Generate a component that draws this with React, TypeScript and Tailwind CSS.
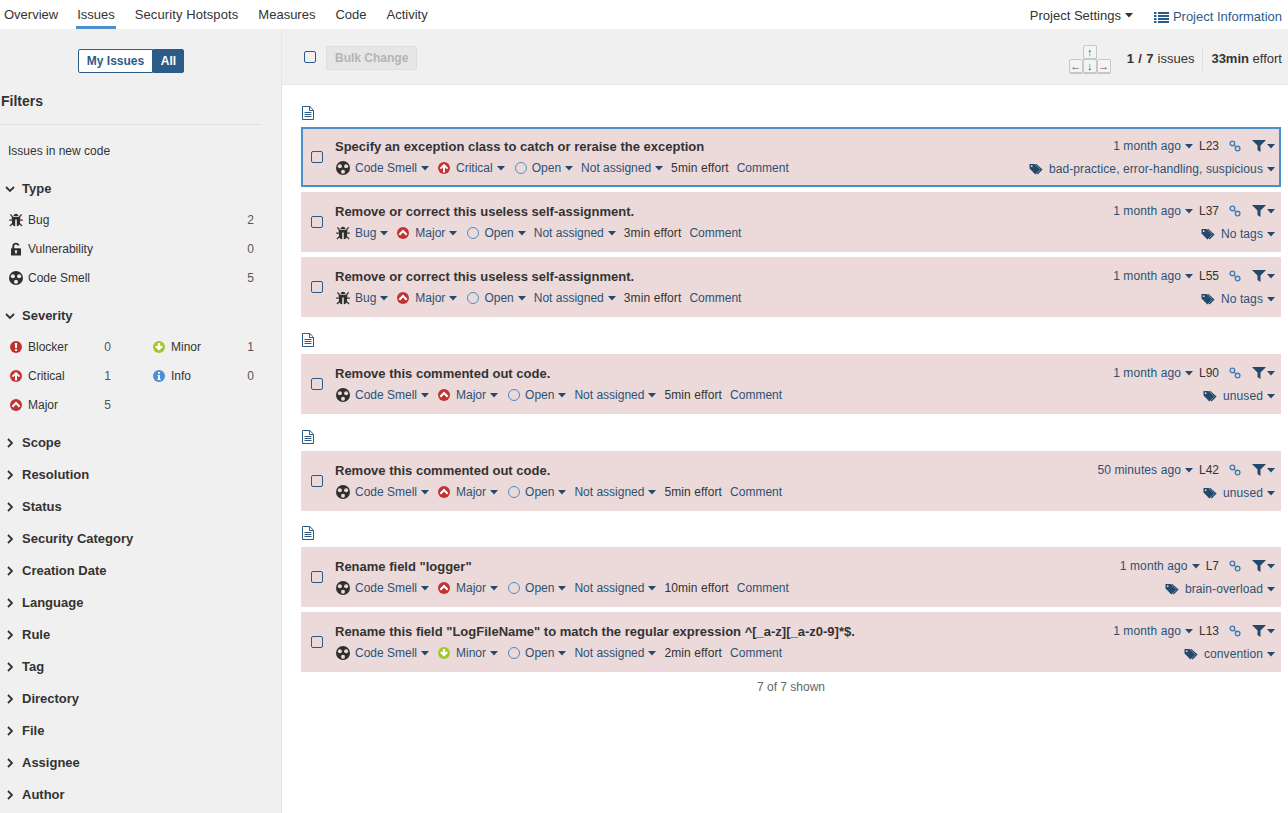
import type { ReactNode } from 'react';

const FONT = "font-['Liberation_Sans',Arial,sans-serif]";

function Caret({ className = '' }: { className?: string }) {
  return (
    <svg width="8" height="5" viewBox="0 0 8 5" className={`ml-1 shrink-0 ${className}`}>
      <path d="M0 0h8L4 4.600z" fill="currentColor" />
    </svg>
  );
}

function BugIcon() {
  return (
    <svg width="14" height="14" viewBox="0 0 14 14" className="shrink-0">
      <path
        d="M4.400 3.200C4.600 1.700 5.700.8 7 .8s2.400.9 2.600 2.400zM3.200 3.900h7.600c.3 0 .5.2.5.5V6H11v4.200c0 1.600-1.400 3-3.200 3.100V6.500H6.200v6.800C4.400 13.200 3 11.800 3 10.200V6h-.3V4.400c0-.3.2-.5.5-.5z"
        fill="#2f2f2f"
      />
      <path
        d="M1.400 1.400l2.200 2.600M12.600 1.400l-2.200 2.600M.2 7.200h3.200M13.800 7.200h-3.200M.9 13l2.900-2.900M13.100 13l-2.900-2.900"
        stroke="#2f2f2f"
        strokeWidth="1.200"
        fill="none"
      />
    </svg>
  );
}

function VulnerabilityIcon() {
  return (
    <svg width="14" height="14" viewBox="0 0 14 14" className="shrink-0">
      <path
        d="M3.300 6.200V4.300C3.300 2.200 4.900.8 6.900.8c1.800 0 3.100 1 3.500 2.700H8.500C8.200 2.900 7.700 2.600 6.900 2.600c-1 0-1.700.7-1.700 1.700v1.900h6.100c.4 0 .7.3.7.7v6c0 .4-.3.7-.7.7H2.700c-.4 0-.7-.3-.7-.7v-6c0-.4.3-.7.7-.7zM7 8.200c-.7 0-1.200.5-1.200 1.200 0 .4.200.8.600 1v1.300h1.200v-1.300c.4-.2.600-.6.600-1 0-.7-.5-1.200-1.200-1.200z"
        fill="#2f2f2f"
        fillRule="evenodd"
      />
    </svg>
  );
}

function CodeSmellIcon({ bg = '#ecd9d9' }: { bg?: string }) {
  return (
    <svg width="14" height="14" viewBox="0 0 14 14" className="shrink-0">
      <circle cx="7" cy="7" r="7" fill="#2f2f2f" />
      <circle cx="3.900" cy="5.200" r="2" fill={bg} />
      <circle cx="10.100" cy="5.200" r="2" fill={bg} />
      <circle cx="7" cy="10.700" r="2" fill={bg} />
    </svg>
  );
}

function SeverityIcon({ level }: { level: string }) {
  if (level === 'Blocker') {
    return (
      <svg width="14" height="14" viewBox="0 0 14 14" className="shrink-0">
        <circle cx="7" cy="7" r="6" fill="#c13333" />
        <path d="M6 3h2v5H6zM6 9.200h2V11H6z" fill="#fff" />
      </svg>
    );
  }
  if (level === 'Critical') {
    return (
      <svg width="14" height="14" viewBox="0 0 14 14" className="shrink-0">
        <circle cx="7" cy="7" r="6" fill="#c13333" />
        <path d="M7 2.800l4.200 4.200-1.300 1.200-1.900-1.900V11.400H6V6.300L4.100 8.200 2.800 7z" fill="#fff" />
      </svg>
    );
  }
  if (level === 'Major') {
    return (
      <svg width="14" height="14" viewBox="0 0 14 14" className="shrink-0">
        <circle cx="7" cy="7" r="6" fill="#c13333" />
        <path d="M7 3.600l4.400 4.300-1.500 1.500L7 6.600 4.100 9.400 2.600 7.900z" fill="#fff" />
      </svg>
    );
  }
  if (level === 'Minor') {
    return (
      <svg width="14" height="14" viewBox="0 0 14 14" className="shrink-0">
        <circle cx="7" cy="7" r="6" fill="#a4c52b" />
        <path d="M5.800 3h2.400v3.600l1.600-1.200 1.200 1.400L7 10.600 3 6.800l1.200-1.400 1.600 1.200z" fill="#fff" />
      </svg>
    );
  }
  return (
    <svg width="14" height="14" viewBox="0 0 14 14" className="shrink-0">
      <circle cx="7" cy="7" r="6" fill="#4b8fd0" />
      <path d="M6 3h2v1.800H6zM5.600 6h2.400v4h.8v1H5.400v-1H6V7h-.4z" fill="#fff" />
    </svg>
  );
}

function TypeIcon({ type }: { type: string }) {
  if (type === 'Bug') return <BugIcon />;
  if (type === 'Vulnerability') return <VulnerabilityIcon />;
  return <CodeSmellIcon />;
}

function FileIcon() {
  return (
    <svg width="14" height="14" viewBox="0 0 14 14">
      <path
        d="M1.500.5h7.300l3.700 3.700v9.300h-11zM8.500.7v3.800h3.800M3.500 6.500h7M3.500 8.500h7M3.500 10.500h7"
        fill="none"
        stroke="#2d5b88"
        strokeWidth="1"
      />
    </svg>
  );
}

function TagIcon() {
  return (
    <svg width="15" height="12" viewBox="0 0 15 12" className="shrink-0">
      <path d="M0.500 1h5l5.800 5.600L6.400 11.500.5 5.600z" fill="#25496b" />
      <path d="M7.400 1l6.200 5.600-4.900 4.900-1-.9 3.800-4L6 1z" fill="#25496b" />
      <circle cx="2.700" cy="3.200" r="0.900" fill="#ecd9d9" />
    </svg>
  );
}

function LinkIcon() {
  return (
    <svg width="12" height="12" viewBox="0 0 12 12">
      <circle cx="3.400" cy="3.400" r="2.300" fill="none" stroke="#3f7fb8" strokeWidth="1.400" />
      <circle cx="8.600" cy="8.600" r="2.300" fill="none" stroke="#3f7fb8" strokeWidth="1.400" />
      <path d="M4.800 4.800l2.400 2.400" stroke="#3f7fb8" strokeWidth="1.200" />
    </svg>
  );
}

function FilterIcon() {
  return (
    <span className="flex items-center text-[#25496b]">
      <svg width="14" height="12" viewBox="0 0 14 12">
        <path d="M0 0h14L8.500 5.600V12L5.500 10V5.600z" fill="currentColor" />
      </svg>
      <Caret className="!ml-[1px]" />
    </span>
  );
}

function Dropdown({ icon, label, className = '' }: { icon?: ReactNode; label: string; className?: string }) {
  return (
    <span className={`flex items-center text-[#2b5275] ${className}`}>
      {icon && <span className="mr-[5px] flex">{icon}</span>}
      {label}
      <Caret className="text-[#25496b]" />
    </span>
  );
}

type Issue = {
  title: string;
  type: string;
  severity: string;
  effort: string;
  age: string;
  line: string;
  tags: string;
  selected?: boolean;
};

function IssueRow({ issue }: { issue: Issue }) {
  const border = issue.selected ? 'border-2 border-[#4b8fc9]' : 'border-2 border-[#ecd9d9]';
  return (
    <div className={`flex h-[60px] items-center bg-[#ecd9d9] pr-[4px] ${border}`}>
      <div className="ml-[8px] h-[12px] w-[12px] shrink-0 rounded-[2px] border border-[#2d5b88]" />
      <div className="ml-[12px] flex min-w-0 flex-1 flex-col">
        <div className="flex h-[20px] items-center justify-between">
          <span className="pt-[1px] text-[13px] font-bold text-[#333]">{issue.title}</span>
          <span className="flex items-center">
            <Dropdown label={issue.age} className="tracking-[0.1px]" />
            <span className="ml-[6px] text-[#333]">{issue.line}</span>
            <span className="ml-[10px] mr-[11px] flex"><LinkIcon /></span>
            <FilterIcon />
          </span>
        </div>
        <div className="mt-[2px] flex h-[20px] items-center justify-between">
          <span className="flex items-center">
            <span className="ml-[1px]">
              <Dropdown icon={<TypeIcon type={issue.type} />} label={issue.type} />
            </span>
            <span className="ml-[8px]">
              <Dropdown icon={<SeverityIcon level={issue.severity} />} label={issue.severity} />
            </span>
            <span className="ml-[10px]">
              <Dropdown
                icon={<span className="h-[12px] w-[12px] rounded-full border-[1.5px] border-[#4b8fc9]" />}
                label="Open"
              />
            </span>
            <span className="ml-[8px]">
              <Dropdown label="Not assigned" />
            </span>
            <span className="ml-[8px] tracking-[0.1px] text-[#333]">{issue.effort} effort</span>
            <span className="ml-[8px] text-[#2b5275]">Comment</span>
          </span>
          <span className="pt-[2px]">
            <Dropdown icon={<TagIcon />} label={issue.tags} className="tracking-[0.1px]" />
          </span>
        </div>
      </div>
    </div>
  );
}

const GROUPS: Issue[][] = [
  [
    { title: 'Specify an exception class to catch or reraise the exception', type: 'Code Smell', severity: 'Critical', effort: '5min', age: '1 month ago', line: 'L23', tags: 'bad-practice, error-handling, suspicious', selected: true },
    { title: 'Remove or correct this useless self-assignment.', type: 'Bug', severity: 'Major', effort: '3min', age: '1 month ago', line: 'L37', tags: 'No tags' },
    { title: 'Remove or correct this useless self-assignment.', type: 'Bug', severity: 'Major', effort: '3min', age: '1 month ago', line: 'L55', tags: 'No tags' },
  ],
  [
    { title: 'Remove this commented out code.', type: 'Code Smell', severity: 'Major', effort: '5min', age: '1 month ago', line: 'L90', tags: 'unused' },
  ],
  [
    { title: 'Remove this commented out code.', type: 'Code Smell', severity: 'Major', effort: '5min', age: '50 minutes ago', line: 'L42', tags: 'unused' },
  ],
  [
    { title: 'Rename field "logger"', type: 'Code Smell', severity: 'Major', effort: '10min', age: '1 month ago', line: 'L7', tags: 'brain-overload' },
    { title: 'Rename this field "LogFileName" to match the regular expression ^[_a-z][_a-z0-9]*$.', type: 'Code Smell', severity: 'Minor', effort: '2min', age: '1 month ago', line: 'L13', tags: 'convention' },
  ],
];

// spacing above each file group, the reference is not quite even
const GROUP_PADDING = ['pt-[20px]', 'pt-[15px]', 'pt-[15px]', 'pt-[14px]'];

const COLLAPSED = ['Scope', 'Resolution', 'Status', 'Security Category', 'Creation Date', 'Language', 'Rule', 'Tag', 'Directory', 'File', 'Assignee', 'Author'];

function FacetHeader({ label, open }: { label: string; open?: boolean }) {
  return (
    <div className="flex h-[32px] items-center">
      <svg width="10" height="10" viewBox="0 0 10 10" className="ml-[5px] shrink-0">
        <path
          d={open ? 'M1 3l4 4 4-4' : 'M3 1l4 4-4 4'}
          fill="none"
          stroke="#333"
          strokeWidth="1.800"
        />
      </svg>
      <span className="ml-[7px] text-[13px] font-bold text-[#333]">{label}</span>
    </div>
  );
}

function FacetItem({ icon, label, count, wide }: { icon: ReactNode; label: string; count: number; wide?: boolean }) {
  return (
    <div className={`flex h-[29px] items-center justify-between pl-[9px] ${wide ? 'pr-[32px]' : 'pr-[27px]'}`}>
      <span className="flex items-center text-[#333]">
        {icon}
        <span className="ml-[5px]">{label}</span>
      </span>
      <span className="text-[#555]">{count}</span>
    </div>
  );
}

function Sidebar() {
  return (
    <aside className="h-[784px] w-[282px] shrink-0 overflow-hidden border-r border-[#e6e6e6] bg-[#f0f0f0]">
      <div className="flex justify-center pt-[20px] pr-[19px]">
        <div className="flex h-[24px] items-stretch text-[12px] font-bold">
          <span className="flex w-[75px] items-center justify-center rounded-l-[2px] border border-[#2d5b88] bg-white text-[#2d5b88]">My Issues</span>
          <span className="flex w-[31px] items-center justify-center rounded-r-[2px] border border-[#2d5b88] bg-[#2d5b88] text-white">All</span>
        </div>
      </div>
      <div className="mt-[20px] ml-[1px] mr-[20px] border-b border-[#e0e0e0] pb-[14px] text-[14px] font-bold leading-[17px] text-[#333]">
        Filters
      </div>
      <div className="mt-[18px] ml-[8px] leading-[16px] text-[#333]">Issues in new code</div>
      <div className="mt-[14px]">
        <FacetHeader label="Type" open />
      </div>
      <div>
        <FacetItem icon={<BugIcon />} label="Bug" count={2} />
        <FacetItem icon={<VulnerabilityIcon />} label="Vulnerability" count={0} />
        <FacetItem icon={<CodeSmellIcon bg="#f0f0f0" />} label="Code Smell" count={5} />
      </div>
      <div className="mt-[8px]">
        <FacetHeader label="Severity" open />
      </div>
      <div className="grid grid-cols-[143px_1fr]">
        <FacetItem icon={<SeverityIcon level="Blocker" />} label="Blocker" count={0} wide />
        <FacetItem icon={<SeverityIcon level="Minor" />} label="Minor" count={1} />
        <FacetItem icon={<SeverityIcon level="Critical" />} label="Critical" count={1} wide />
        <FacetItem icon={<SeverityIcon level="Info" />} label="Info" count={0} />
        <FacetItem icon={<SeverityIcon level="Major" />} label="Major" count={5} wide />
      </div>
      <div className="mt-[8px]">
        {COLLAPSED.map((label) => (
          <FacetHeader key={label} label={label} />
        ))}
      </div>
    </aside>
  );
}

function Key({ children }: { children: string }) {
  return (
    <span className="flex h-[14px] w-[14px] items-center justify-center rounded-[2px] border border-[#c8c8c8] bg-[#f4f4f4] text-[11px] leading-none text-[#555] shadow-[0_1px_0_#c4c4c4]">
      {children}
    </span>
  );
}

function Toolbar() {
  return (
    <div className="flex h-[56px] items-center border-b border-[#e6e6e6] bg-[#f0f0f0] pr-[6px]">
      <div className="ml-[22px] h-[12px] w-[12px] rounded-[2px] border border-[#2d5b88]" />
      <span className="ml-[10px] mt-[2px] flex h-[24px] items-center rounded-[2px] border border-[#ddd] bg-[#e6e6e6] px-[8px] font-bold text-[#b4b4b4]">
        Bulk Change
      </span>
      <div className="ml-auto mt-[5px] flex items-center">
        <div className="flex flex-col items-center">
          <Key>↑</Key>
          <div className="flex">
            <Key>←</Key>
            <Key>↓</Key>
            <Key>→</Key>
          </div>
        </div>
        <span className="ml-[16px] text-[13px] text-[#333]">
          <b className="tracking-[0.4px]">1 / 7</b> issues
        </span>
        <span className="ml-[8px] h-[24px] border-l border-[#e0e0e0] pl-[8px] text-[13px] leading-[24px] text-[#333]">
          <b>33min</b> effort
        </span>
      </div>
    </div>
  );
}

export default function App() {
  return (
    <div className={`h-[813px] w-[1288px] overflow-hidden bg-white text-[12px] ${FONT}`}>
      <nav className="flex h-[29px] items-start text-[13px] text-[#333]">
        <div className="flex gap-[20px] pl-[4px]">
          <span className="pt-[5px]">Overview</span>
          <span className="-ml-[2px] h-[29px] border-b-[3px] border-[#4b8fc9] px-[1px] pt-[5px]">Issues</span>
          <span className="-ml-[1px] pt-[5px] tracking-[0.1px]">Security Hotspots</span>
          <span className="pt-[5px]">Measures</span>
          <span className="pt-[5px]">Code</span>
          <span className="pt-[5px]">Activity</span>
        </div>
        <div className="ml-auto flex items-center pt-[7px] pr-[6px]">
          <span className="-mt-[2px] flex items-center">
            Project Settings
            <Caret />
          </span>
          <span className="ml-[21px] flex items-center text-[#2d5b88]">
            <svg width="15" height="12" viewBox="0 0 15 12" className="mr-[4px]">
              <path d="M0 1h2.500v2H0zM4 1h11v2H4zM0 4h2.500v2H0zM4 4h11v2H4zM0 7h2.500v2H0zM4 7h11v2H4zM0 10h2.500v2H0zM4 10h11v2H4z" fill="#2d5b88" />
            </svg>
            Project Information
          </span>
        </div>
      </nav>
      <div className="flex">
        <Sidebar />
        <main className="min-w-0 flex-1">
          <Toolbar />
          <div className="pl-[19px] pr-[7px]">
            {GROUPS.map((group, i) => (
              <section key={i} className={GROUP_PADDING[i]}>
                <div className="flex h-[22px] items-start pt-[1px]">
                  <FileIcon />
                </div>
                <div className="flex flex-col gap-[5px]">
                  {group.map((issue) => (
                    <IssueRow key={issue.title + issue.line} issue={issue} />
                  ))}
                </div>
              </section>
            ))}
            <div className="mt-[8px] text-center leading-[14px] text-[#666]">7 of 7 shown</div>
          </div>
        </main>
      </div>
    </div>
  );
}
